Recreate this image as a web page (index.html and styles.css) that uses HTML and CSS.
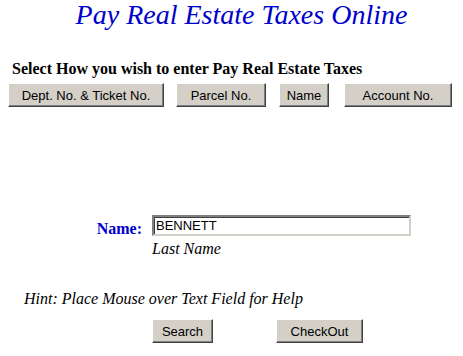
FILE: index.html
```html
<!DOCTYPE html>
<html>
<head>
<meta charset="utf-8">
<title>Pay Real Estate Taxes Online</title>
<link rel="stylesheet" href="styles.css">
</head>
<body>
<div class="page">
  <h1 class="title">Pay Real Estate Taxes Online</h1>
  <h2 class="heading">Select How you wish to enter Pay Real Estate Taxes</h2>
  <div class="modes">
    <button class="btn btn-dept">Dept. No. &amp; Ticket No.</button>
    <button class="btn btn-parcel">Parcel No.</button>
    <button class="btn btn-name">Name</button>
    <button class="btn btn-account">Account No.</button>
  </div>
  <form class="search-form">
    <div class="field">
      <label class="field-label" for="lname">Name:</label>
      <div class="field-control">
        <input class="text-input" id="lname" type="text" value="BENNETT">
        <div class="field-note">Last Name</div>
      </div>
    </div>
    <p class="hint">Hint: Place Mouse over Text Field for Help</p>
    <div class="actions">
      <button type="button" class="btn btn-search">Search</button>
      <button type="button" class="btn btn-checkout">CheckOut</button>
    </div>
  </form>
</div>
</body>
</html>
```

FILE: styles.css
```css
html, body {
  margin: 0;
  padding: 0;
  background: #ffffff;
}

body {
  font-family: "Liberation Serif", "Times New Roman", serif;
  color: #000000;
}

.page {
  padding: 0 8px;
  width: 447px;
}

.title {
  margin: 0;
  padding-top: 1px;
  padding-left: 20px;
  font-size: 28px;
  line-height: 28px;
  font-weight: normal;
  font-style: italic;
  text-align: center;
  color: #0000cc;
}

.heading {
  margin: 31px 0 0 4px;
  font-size: 16px;
  line-height: 18px;
  font-weight: bold;
}

.modes {
  display: flex;
  margin-top: 5px;
}

.btn {
  box-sizing: border-box;
  height: 24px;
  padding: 0;
  margin: 0;
  background: #d4d0c8;
  border: 1px solid;
  border-color: #ffffff #404040 #404040 #ffffff;
  box-shadow: inset -1px -1px 0 #808080;
  font-family: "Liberation Sans", Arial, sans-serif;
  font-size: 13px;
  color: #000000;
}

.btn-dept { width: 156px; }
.btn-parcel { width: 90px; margin-left: 12px; }
.btn-name { width: 50px; margin-left: 13px; }
.btn-account { width: 108px; margin-left: 15px; }

.search-form {
  margin: 108px 0 0 0;
}

.field {
  display: grid;
  grid-template-columns: 134px 259px;
  column-gap: 10px;
}

.field-label {
  align-self: start;
  margin-top: 5px;
  text-align: right;
  font-size: 16px;
  line-height: 18px;
  font-weight: bold;
  color: #0000cc;
}

.text-input {
  display: block;
  box-sizing: border-box;
  width: 259px;
  height: 21px;
  margin: 0;
  padding: 0 2px;
  background: #ffffff;
  border: 2px solid;
  border-color: #808080 #d4d0c8 #d4d0c8 #808080;
  box-shadow: inset 1px 1px 0 #404040;
  font-family: "Liberation Sans", Arial, sans-serif;
  font-size: 13px;
  color: #000000;
  outline: none;
}

.field-note {
  margin-top: 4px;
  font-size: 16px;
  line-height: 18px;
  font-style: italic;
}

.hint {
  margin: 32px 0 0 16px;
  font-size: 16px;
  line-height: 18px;
  font-style: italic;
}

.actions {
  display: flex;
  margin-top: 11px;
  padding-left: 144px;
}

.btn-search { width: 61px; }
.btn-checkout { width: 87px; margin-left: 63px; }
```
